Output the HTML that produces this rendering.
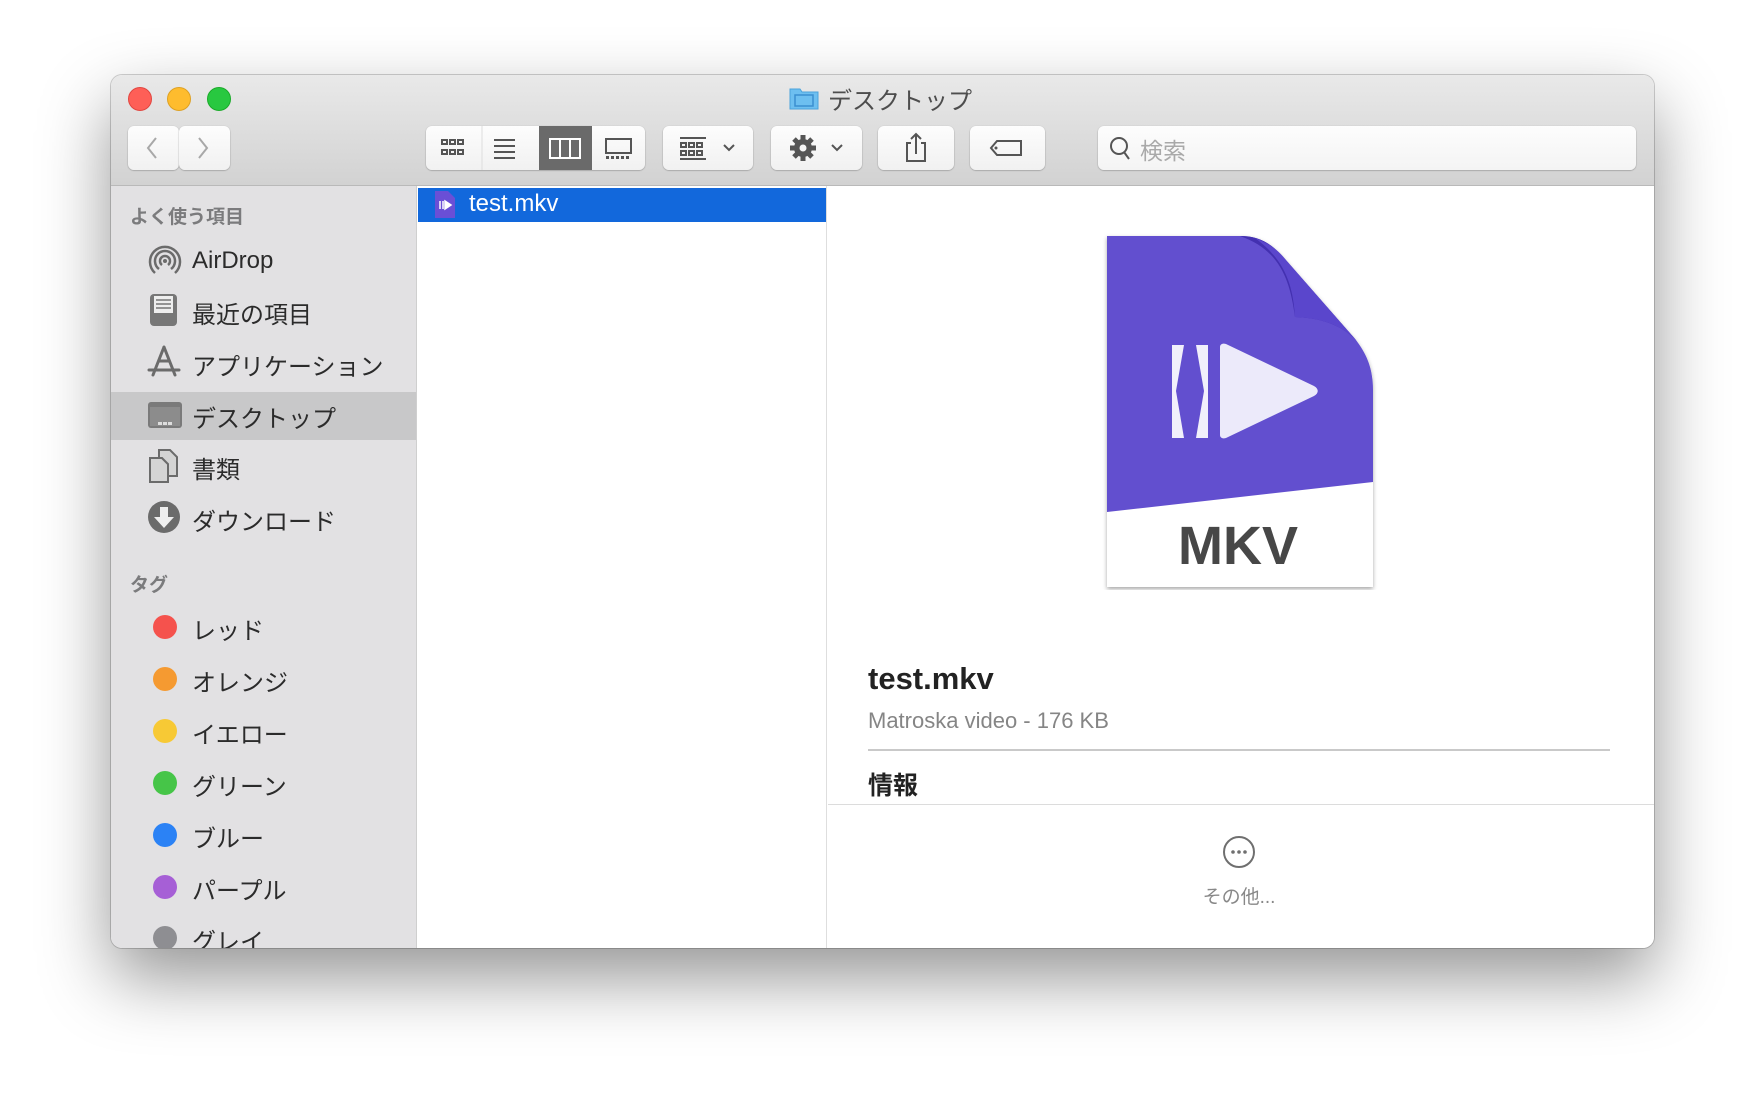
<!DOCTYPE html>
<html><head><meta charset="utf-8"><style>
*{margin:0;padding:0;box-sizing:border-box}
body{width:1764px;height:1096px;background:#fff;position:relative;overflow:hidden;font-family:"Liberation Sans","Noto Sans CJK JP",sans-serif}
.win{position:absolute;left:111px;top:75px;width:1543px;height:873px;border-radius:11px;overflow:hidden;background:#fff;box-shadow:0 30px 70px rgba(0,0,0,.42),0 0 0 1px rgba(0,0,0,.18)}
.tb{position:absolute;left:0;top:0;width:100%;height:111px;background:linear-gradient(#e9e9e9,#d2d2d2);border-bottom:1px solid #b9b9b9}
.tl{position:absolute;top:12px;width:24px;height:24px;border-radius:50%}
.btn{position:absolute;top:51px;height:44px;background:linear-gradient(#fdfdfd,#f1f1f1);border-radius:6px;box-shadow:0 0.5px 1.5px rgba(0,0,0,.35)}
.side{position:absolute;left:0;top:111px;width:306px;height:762px;background:#e2e1e3;border-right:1px solid #cfcfcf}
.sh{position:absolute;left:19px;font-size:19px;font-weight:bold;color:#7b7b7d}
.it{position:absolute;left:0;width:305px;height:46px;font-size:24px;color:#2b2b2b}
.it span{position:absolute;left:81px;top:8px}
.it svg{position:absolute;left:36px;top:6px}
.dot{position:absolute;left:42px;top:12px;width:24px;height:24px;border-radius:50%}
.col{position:absolute;left:306px;top:111px;width:410px;height:762px;background:#fff;border-right:1px solid #dedede}
.sel{position:absolute;left:1px;top:2px;width:408px;height:34px;background:#1268dc;color:#fff;font-size:24px}
</style></head><body>
<div class="win">
 <div class="tb">
  <div class="tl" style="left:17px;background:#fe5f57;border:1px solid #e14640"></div>
  <div class="tl" style="left:56px;background:#febc2e;border:1px solid #dea123"></div>
  <div class="tl" style="left:96px;background:#28c840;border:1px solid #1aab29"></div>
  <svg style="position:absolute;left:678px;top:11px" width="30" height="24"><path d="M1 3h10l2 3h16v17H1z" fill="#6dbff0" stroke="#4aa3dc"/><rect x="6" y="9" width="18" height="11" fill="none" stroke="#3b8fd0" stroke-width="1.5"/></svg>
  <div style="position:absolute;left:717px;top:6px;font-size:24px;color:#4d4d4d">デスクトップ</div>
  <div class="btn" style="left:17px;width:51px"><svg width="51" height="44"><path d="M28 12l-8 10 8 10" fill="none" stroke="#a8a8a8" stroke-width="2"/></svg></div>
  <div class="btn" style="left:68px;width:51px"><svg width="51" height="44"><path d="M20 12l8 10-8 10" fill="none" stroke="#a8a8a8" stroke-width="2"/></svg></div>
  <div class="btn" style="left:315px;width:219px;overflow:hidden">
   <svg width="219" height="44">
    <g fill="none" stroke="#555" stroke-width="2"><rect x="16" y="14" width="5" height="4"/><rect x="24" y="14" width="5" height="4"/><rect x="32" y="14" width="5" height="4"/><rect x="16" y="24" width="5" height="4"/><rect x="24" y="24" width="5" height="4"/><rect x="32" y="24" width="5" height="4"/></g>
    <line x1="56" y1="0" x2="56" y2="44" stroke="#ddd"/>
    <g stroke="#555" stroke-width="2"><line x1="68" y1="14" x2="89" y2="14"/><line x1="68" y1="20" x2="89" y2="20"/><line x1="68" y1="26" x2="89" y2="26"/><line x1="68" y1="32" x2="89" y2="32"/></g>
    <rect x="113" y="0" width="53" height="44" fill="#6a6a6a"/>
    <g fill="none" stroke="#fff" stroke-width="2"><rect x="124" y="13" width="30" height="19"/><line x1="134" y1="13" x2="134" y2="32"/><line x1="144" y1="13" x2="144" y2="32"/></g>
    <g fill="none" stroke="#555" stroke-width="2"><rect x="180" y="13" width="25" height="14"/></g>
    <g fill="#555"><rect x="180" y="30" width="3" height="3"/><rect x="185" y="30" width="3" height="3"/><rect x="190" y="30" width="3" height="3"/><rect x="195" y="30" width="3" height="3"/><rect x="200" y="30" width="3" height="3"/></g>
   </svg></div>
  <div class="btn" style="left:552px;width:90px"><svg width="90" height="44"><g fill="none" stroke="#555" stroke-width="2"><line x1="17" y1="12" x2="43" y2="12"/><rect x="18" y="17" width="5" height="4"/><rect x="26" y="17" width="5" height="4"/><rect x="34" y="17" width="5" height="4"/><rect x="18" y="25" width="5" height="4"/><rect x="26" y="25" width="5" height="4"/><rect x="34" y="25" width="5" height="4"/><line x1="17" y1="33" x2="43" y2="33"/><path d="M61 19l5 5 5-5"/></g></svg></div>
  <div class="btn" style="left:660px;width:91px"><svg width="91" height="44"><g transform="translate(32,22)"><circle r="9" fill="#555"/><g stroke="#555" stroke-width="5"><line x1="0" y1="-13" x2="0" y2="13"/><line x1="-13" y1="0" x2="13" y2="0"/><line x1="-9" y1="-9" x2="9" y2="9"/><line x1="-9" y1="9" x2="9" y2="-9"/></g><circle r="3.5" fill="#f5f5f5"/></g><path d="M61 19l5 5 5-5" fill="none" stroke="#555" stroke-width="2"/></svg></div>
  <div class="btn" style="left:767px;width:76px"><svg width="76" height="44"><g fill="none" stroke="#555" stroke-width="2"><path d="M33 17h-4v18h18V17h-4"/><path d="M38 28V8M33 13l5-5 5 5"/></g></svg></div>
  <div class="btn" style="left:859px;width:75px"><svg width="75" height="44"><g fill="none" stroke="#555" stroke-width="2"><path d="M27 15h24v14H27l-6-7z"/></g><circle cx="26" cy="22" r="1.5" fill="#555"/></svg></div>
  <div class="btn" style="left:987px;width:538px;background:linear-gradient(#fdfdfd,#f4f4f4)"><svg width="40" height="44"><circle cx="21" cy="20" r="8" fill="none" stroke="#555" stroke-width="2"/><line x1="26" y1="26" x2="31" y2="33" stroke="#555" stroke-width="2"/></svg><span style="position:absolute;left:42px;top:6px;font-size:23px;color:#a9a9a9">検索</span></div>
 </div>
 <div class="side">
  <div class="sh" style="top:16px">よく使う項目</div>
  <div class="it" style="top:53px"><svg width="38" height="34"><g fill="none" stroke="#6b6b6b" stroke-width="2.5"><path d="M8 28a15 15 0 1 1 20 0"/><path d="M12 24a10 10 0 1 1 12 0"/><path d="M15 20a5 5 0 1 1 6 0"/></g><circle cx="18" cy="16" r="2" fill="#6b6b6b"/></svg><span>AirDrop</span></div>
  <div class="it" style="top:101px"><svg width="38" height="34"><rect x="3" y="1" width="27" height="32" rx="4" fill="#777"/><rect x="7" y="3" width="19" height="17" fill="#eee"/><g stroke="#777" stroke-width="1.5"><line x1="9" y1="7" x2="24" y2="7"/><line x1="9" y1="11" x2="24" y2="11"/><line x1="9" y1="15" x2="24" y2="15"/></g></svg><span>最近の項目</span></div>
  <div class="it" style="top:153px"><svg width="38" height="34"><g stroke="#6b6b6b" stroke-width="3" fill="none" stroke-linecap="round"><path d="M17 2L6 30M17 2l11 28M2 25h30M12 16h10"/></g></svg><span>アプリケーション</span></div>
  <div class="it" style="top:206px;height:48px;background:#c8c8c9"><svg width="38" height="34"><rect x="1" y="4" width="34" height="26" rx="3" fill="#7a7a7a"/><rect x="3" y="9" width="30" height="19" fill="#8c8c8c"/><g fill="#ddd"><rect x="11" y="24" width="4" height="3"/><rect x="16" y="24" width="4" height="3"/><rect x="21" y="24" width="4" height="3"/></g></svg><span style="top:7px">デスクトップ</span></div>
  <div class="it" style="top:256px"><svg width="38" height="36"><g fill="#d4d4d4" stroke="#6b6b6b" stroke-width="2"><path d="M3 10h12l6 6v18H3z"/><path d="M12 2h11l7 7v19H21V16l-6-6h-3z"/></g></svg><span>書類</span></div>
  <div class="it" style="top:308px"><svg width="38" height="36"><circle cx="17" cy="17" r="16" fill="#6b6b6b"/><path d="M13 7h8v10h6l-10 11L7 17h6z" fill="#eee"/></svg><span>ダウンロード</span></div>
  <div class="sh" style="top:384px">タグ</div>
  <div class="it" style="top:417px"><div class="dot" style="background:#f5524d"></div><span>レッド</span></div>
  <div class="it" style="top:469px"><div class="dot" style="background:#f59a31"></div><span>オレンジ</span></div>
  <div class="it" style="top:521px"><div class="dot" style="background:#f7c935"></div><span>イエロー</span></div>
  <div class="it" style="top:573px"><div class="dot" style="background:#46c548"></div><span>グリーン</span></div>
  <div class="it" style="top:625px"><div class="dot" style="background:#2b82f5"></div><span>ブルー</span></div>
  <div class="it" style="top:677px"><div class="dot" style="background:#a65fd6"></div><span>パープル</span></div>
  <div class="it" style="top:728px"><div class="dot" style="background:#8e8e92"></div><span>グレイ</span></div>
 </div>
 <div class="col">
  <div class="sel"><svg style="position:absolute;left:16px;top:2px" width="22" height="29"><path d="M1 1h13l7 7v20H1z" fill="#6a4fd6"/><path d="M6 11v8M9 11v8M11 11l6 4-6 4z" fill="#fff" stroke="#fff" stroke-width="1.5"/></svg><span style="position:absolute;left:51px;top:2px">test.mkv</span></div>
 </div>
 <div style="position:absolute;left:717px;top:111px;width:826px;height:762px;background:#fff">
  <svg style="position:absolute;left:262px;top:34px" width="300" height="370">
   <defs><filter id="s"><feDropShadow dx="0" dy="2" stdDeviation="2" flood-opacity=".35"/></filter></defs>
   <path d="M17 16H150C168 16 180 22 194 38L266 120C278 136 283 150 283 170V367H17Z" fill="#fff" filter="url(#s)"/>
   <path d="M17 16H150C168 16 180 22 194 38L266 120C278 136 283 150 283 170V262L17 292Z" fill="#624fcf"/>
   <path d="M150 16C168 16 180 22 194 38L266 120C250 104 230 98 205 97C200 60 190 30 150 16Z" fill="#4330b0"/>
   <path d="M205 97C203 65 195 40 165 18C180 24 188 30 196 40L266 120C250 104 230 98 205 97Z" fill="#5a46cc"/>
   <path d="M82 125h12l-8 46 8 47H82zM106 125h12v93h-12l8-47z" fill="#f1f0fb"/>
   <path d="M130 127c0-3 3-4 6-3l88 42c5 3 5 7 0 10l-88 42c-3 1-6 0-6-3z" fill="#eceafa"/>
   <text x="148" y="344" text-anchor="middle" font-family="Liberation Sans" font-weight="bold" font-size="54" fill="#474747">MKV</text>
  </svg>
  <div style="position:absolute;left:40px;top:475px;font-size:31px;font-weight:bold;color:#222">test.mkv</div>
  <div style="position:absolute;left:40px;top:522px;font-size:22px;color:#858585">Matroska video - 176 KB</div>
  <div style="position:absolute;left:40px;top:563px;width:742px;height:2px;background:#c9c9c9"></div>
  <div style="position:absolute;left:40px;top:580px;font-size:25px;font-weight:bold;color:#222">情報</div>
  <div style="position:absolute;left:0;top:618px;width:826px;height:1px;background:#dcdcdc"></div>
  <svg style="position:absolute;left:393px;top:648px" width="36" height="36"><circle cx="18" cy="18" r="15" fill="none" stroke="#6f6f6f" stroke-width="2"/><g fill="#6f6f6f"><circle cx="12" cy="18" r="1.8"/><circle cx="18" cy="18" r="1.8"/><circle cx="24" cy="18" r="1.8"/></g></svg>
  <div style="position:absolute;left:311px;width:200px;text-align:center;top:696px;font-size:19px;color:#888">その他...</div>
 </div>
</div>
</body></html>
